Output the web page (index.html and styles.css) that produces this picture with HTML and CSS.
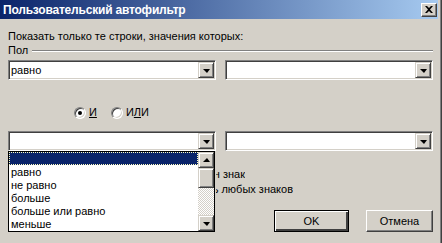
FILE: index.html
```html
<!DOCTYPE html>
<html>
<head>
    <meta charset="UTF-8">
    <title>Пользовательский автофильтр</title>
    <link rel="stylesheet" href="styles.css">
</head>
<body>
    <div class="window">
        <div class="frame">
            <div class="titlebar">
                <span class="title">Пользовательский автофильтр</span>
                <span class="close">
                    <svg width="8" height="7" viewBox="0 0 8 7"><path d="M0 0h2l2 2 2-2h2L5 3.5 8 7H6L4 5 2 7H0l3-3.5z" fill="#000"/></svg>
                </span>
            </div>
            <div class="content">
                <p class="prompt">Показать только те строки, значения которых:</p>
                <div class="group"><span>Пол</span><div class="etch"></div></div>

                <div class="row">
                    <div class="combo"><span class="value">равно</span><span class="drop"><i class="arrow"></i></span></div>
                    <div class="combo"><span class="value"></span><span class="drop"><i class="arrow"></i></span></div>
                </div>

                <div class="radios">
                    <label class="opt"><span class="radio checked"></span><span><u>И</u></span></label>
                    <label class="opt"><span class="radio"></span><span>И<u>Л</u>И</span></label>
                </div>

                <div class="row second">
                    <div class="combo open">
                        <span class="value"></span><span class="drop"><i class="arrow"></i></span>
                        <div class="list">
                            <ul class="items">
                                <li class="selected">&nbsp;</li>
                                <li>равно</li>
                                <li>не равно</li>
                                <li>больше</li>
                                <li>больше или равно</li>
                                <li>меньше</li>
                            </ul>
                            <div class="scrollbar">
                                <span class="sbtn"><i class="arrow up"></i></span>
                                <span class="thumb"></span>
                                <span class="track"></span>
                                <span class="sbtn"><i class="arrow"></i></span>
                            </div>
                        </div>
                    </div>
                    <div class="combo"><span class="value"></span><span class="drop"><i class="arrow"></i></span></div>
                </div>

                <div class="hints">
                    <p class="hint one"><span>Знак вопроса "?" обозначает любой один знак</span></p>
                    <p class="hint two"><span>Знак "*" обозначает последовательность любых знаков</span></p>
                </div>

                <div class="buttons">
                    <button class="btn default">OK</button>
                    <button class="btn cancel">Отмена</button>
                </div>
            </div>
        </div>
    </div>
</body>
</html>
```

FILE: styles.css
```css
body {
    margin: 0;
    width: 442px;
    height: 243px;
    overflow: hidden;
    background: #d4d0c8;
    font-family: "Liberation Sans", Arial, sans-serif;
    font-size: 11px;
    color: #000;
}
.window {
    display: flex;
    height: 243px;
    border-right: 1px solid #404040;
}
.frame {
    flex: 1;
    border-right: 1px solid #808080;
    padding-right: 2px;
}
.titlebar {
    height: 19px;
    display: flex;
    align-items: center;
    justify-content: space-between;
    padding: 0 1px 0 3px;
    background: linear-gradient(to right, #0a246a, #a6caf0);
}
.title {
    color: #fff;
    font-weight: bold;
    font-size: 12px;
    letter-spacing: -0.2px;
}
.close {
    width: 16px;
    height: 14px;
    box-sizing: border-box;
    display: flex;
    align-items: center;
    justify-content: center;
    background: #d4d0c8;
    border: 1px solid;
    border-color: #fff #404040 #404040 #fff;
    box-shadow: inset -1px -1px #808080;
}
.content {
    padding: 11px 5px 0 8px;
}
.prompt {
    margin: 0;
    line-height: 13px;
}
.group {
    display: flex;
    align-items: center;
    line-height: 13px;
    margin-top: 1px;
}
.etch {
    flex: 1;
    margin-left: 4px;
    border-top: 1px solid #808080;
    border-bottom: 1px solid #fff;
}
.row {
    display: flex;
    justify-content: space-between;
    margin-top: 3px;
}
.row.second {
    margin-top: 12px;
}
.combo {
    position: relative;
    width: 208px;
    height: 20px;
    box-sizing: border-box;
    display: flex;
    align-items: center;
    background: #fff;
    border: 1px solid;
    border-color: #808080 #fff #fff #808080;
    box-shadow: inset 1px 1px #404040, inset -1px -1px #d4d0c8;
    padding: 1px;
}
.value {
    flex: 1;
    padding-left: 1px;
    line-height: 16px;
}
.drop, .sbtn {
    width: 16px;
    height: 16px;
    box-sizing: border-box;
    display: flex;
    align-items: center;
    justify-content: center;
    background: #d4d0c8;
    border: 1px solid;
    border-color: #d4d0c8 #404040 #404040 #d4d0c8;
    box-shadow: inset 1px 1px #fff, inset -1px -1px #808080;
}
.arrow {
    width: 0;
    height: 0;
    border-left: 4px solid transparent;
    border-right: 3px solid transparent;
    border-top: 4px solid #000;
    margin-top: 1px;
}
.arrow.up {
    border-top: none;
    border-bottom: 4px solid #000;
    margin-top: -1px;
}
.radios {
    display: flex;
    gap: 14px;
    margin: 26px 0 0 66px;
    line-height: 13px;
}
.opt {
    display: flex;
    align-items: center;
    gap: 3px;
}
.radio {
    width: 12px;
    height: 12px;
    box-sizing: border-box;
    border-radius: 50%;
    border: 1px solid;
    border-color: #808080 #fff #fff #808080;
    box-shadow: inset 1px 1px #404040, inset -1px -1px #d4d0c8;
    background: #fff;
    display: flex;
    align-items: center;
    justify-content: center;
}
.radio.checked::after {
    content: "";
    width: 4px;
    height: 4px;
    border-radius: 50%;
    background: #000;
}
.list {
    position: absolute;
    top: 19px;
    left: -1px;
    width: 207px;
    height: 81px;
    box-sizing: border-box;
    border: 1px solid #000;
    background: #fff;
    display: flex;
    z-index: 2;
}
.items {
    flex: 1;
    margin: 0;
    padding: 0;
    list-style: none;
}
.items li {
    height: 13px;
    line-height: 14px;
    padding-left: 2px;
}
.items li.selected {
    background: #0a246a;
    outline: 1px dotted #ffffc0;
    outline-offset: -1px;
}
.scrollbar {
    width: 16px;
    display: flex;
    flex-direction: column;
}
.thumb {
    height: 20px;
    box-sizing: border-box;
    background: #d4d0c8;
    border: 1px solid;
    border-color: #d4d0c8 #404040 #404040 #d4d0c8;
    box-shadow: inset 1px 1px #fff, inset -1px -1px #808080;
}
.track {
    flex: 1;
    background: repeating-conic-gradient(#fff 0 25%, #d4d0c8 0 50%) 0 0 / 2px 2px;
}
/* only the tail of each hint shows to the right of the open list */
.hints {
    margin: 16px 0 0 208px;
    line-height: 15px;
}
.hint {
    margin: 0;
    display: flex;
    justify-content: flex-end;
    overflow: hidden;
    white-space: nowrap;
}
.hint span {
    flex: none;
}
.hint.one {
    width: 29px;
}
.hint.two {
    width: 77px;
}
.buttons {
    display: flex;
    justify-content: flex-end;
    gap: 17px;
    margin-top: 13px;
}
.btn {
    height: 22px;
    box-sizing: border-box;
    font-family: inherit;
    font-size: 11px;
    color: #000;
    background: #d4d0c8;
    border: 1px solid;
    border-color: #fff #404040 #404040 #fff;
    box-shadow: inset -1px -1px #808080;
    padding: 0;
}
.btn.default {
    width: 75px;
    border: 1px solid #000;
    box-shadow: inset 1px 1px #fff, inset -2px -2px #404040, inset -1px -1px #808080;
}
.btn.cancel {
    width: 67px;
}
```
